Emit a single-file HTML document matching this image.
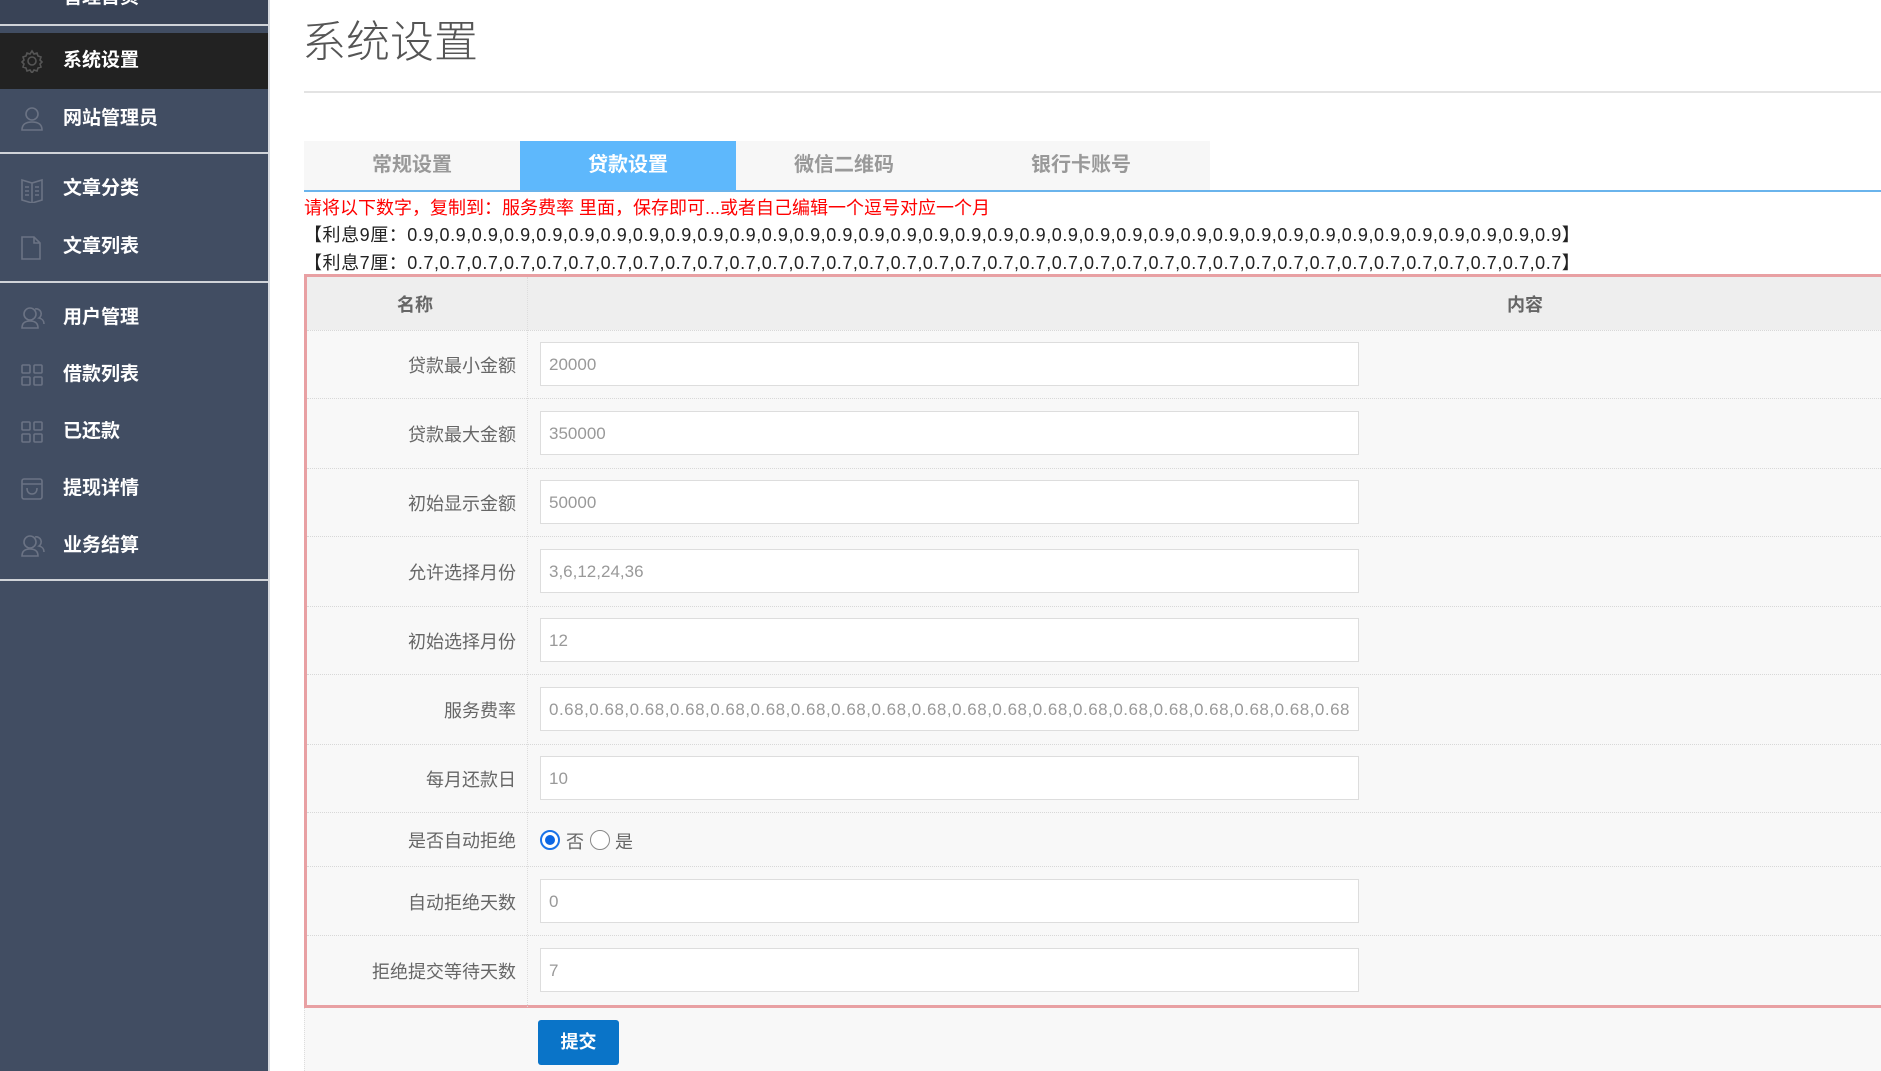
<!DOCTYPE html>
<html><head><meta charset="utf-8"><style>
*{margin:0;padding:0;box-sizing:border-box}
body{width:1881px;height:1071px;overflow:hidden;background:#fff;font-family:"Liberation Sans","Noto Sans CJK SC",sans-serif;position:relative}
.sb{position:absolute;left:0;top:0;width:270px;height:1071px;background:#414d62;border-right:2px solid #d8dbe0}
.sb .top{position:absolute;left:0;top:0;width:268px;height:25px;background:#394356}
.sep{position:absolute;left:0;width:268px;height:2px;background:#d0d3d8}
.it{position:absolute;left:0;width:268px;height:56px;color:#fff;font-weight:bold;font-size:19px;line-height:56px;padding-left:63px}
.it svg{position:absolute;left:20px;top:16px}
.act{background:#222;}
.abs{position:absolute}
.tab{position:absolute;top:141px;height:49px;width:216px;text-align:center;line-height:49px;font-size:20px;font-weight:bold;color:#999;background:#f7f7f7}
.row{position:absolute;left:307px;width:1574px;border-top:1px dotted #d8d8d8}
.lab{position:absolute;right:1365px;font-size:18px;color:#666;text-align:right;white-space:nowrap}
.inp{position:absolute;left:540px;width:819px;height:44px;background:#fff;border:1px solid #ddd;font-size:17px;color:#999;padding-left:8px;line-height:44px}
</style></head><body>
<div class="sb">
<div class="top"></div>
<div class="it" style="top:-30px;">管理首页</div>
<div class="sep" style="top:24px"></div>
<div class="it act" style="top:33px;height:56px">
<svg width="24" height="24" viewBox="0 0 24 24" fill="none" stroke="#555" stroke-width="1.6"><circle cx="12" cy="12" r="4"/><path d="M12 2l2 3 3-1 1 3 3 1-1 3 2 2-2 2 1 3-3 1-1 3-3-1-2 3-2-3-3 1-1-3-3-1 1-3-2-2 2-2-1-3 3-1 1-3 3 1z"/></svg>系统设置</div>
<div class="it" style="top:88px;height:62px;line-height:62px"><svg width="24" height="26" viewBox="0 0 24 26" fill="none" stroke="#6b7384" stroke-width="1.6" style="top:18px"><circle cx="12" cy="8" r="6"/><path d="M2 24c0-6 4-8 10-8s10 2 10 8z"/></svg>网站管理员</div>
<div class="sep" style="top:152px"></div>
<div class="it" style="top:161px"><svg width="24" height="26" viewBox="0 0 24 26" fill="none" stroke="#6b7384" stroke-width="1.6"><path d="M2 3l10 3 10-3v20l-10 3-10-3z M12 6v20 M5 10h4M5 14h4M5 18h4M15 10h4M15 14h4M15 18h4"/></svg>文章分类</div>
<div class="it" style="top:219px"><svg width="22" height="26" viewBox="0 0 22 26" fill="none" stroke="#6b7384" stroke-width="1.6"><path d="M2 2h12l6 6v16H2z M14 2v6h6"/></svg>文章列表</div>
<div class="sep" style="top:281px"></div>
<div class="it" style="top:290px"><svg width="26" height="24" viewBox="0 0 26 24" fill="none" stroke="#6b7384" stroke-width="1.6"><circle cx="10" cy="8" r="6"/><path d="M2 22c0-5 3-7 8-7s8 2 8 7z M15 3a5 5 0 0 1 4 9c4 1 5 3 5 6"/></svg>用户管理</div>
<div class="it" style="top:347px"><svg width="24" height="24" viewBox="0 0 24 24" fill="none" stroke="#6b7384" stroke-width="1.6"><rect x="2" y="2" width="8" height="8" rx="1"/><rect x="14" y="2" width="8" height="8" rx="1"/><rect x="2" y="14" width="8" height="8" rx="1"/><rect x="14" y="14" width="8" height="8" rx="1"/></svg>借款列表</div>
<div class="it" style="top:404px"><svg width="24" height="24" viewBox="0 0 24 24" fill="none" stroke="#6b7384" stroke-width="1.6"><rect x="2" y="2" width="8" height="8" rx="1"/><rect x="14" y="2" width="8" height="8" rx="1"/><rect x="2" y="14" width="8" height="8" rx="1"/><rect x="14" y="14" width="8" height="8" rx="1"/></svg>已还款</div>
<div class="it" style="top:461px"><svg width="24" height="24" viewBox="0 0 24 24" fill="none" stroke="#6b7384" stroke-width="1.6"><rect x="2" y="2" width="20" height="20" rx="2"/><path d="M2 7h20 M7 11c0 4 2 6 5 6s5-2 5-6"/></svg>提现详情</div>
<div class="it" style="top:518px"><svg width="26" height="24" viewBox="0 0 26 24" fill="none" stroke="#6b7384" stroke-width="1.6"><circle cx="10" cy="8" r="6"/><path d="M2 22c0-5 3-7 8-7s8 2 8 7z M15 3a5 5 0 0 1 4 9c4 1 5 3 5 6"/></svg>业务结算</div>
<div class="sep" style="top:579px"></div>
</div>

<div class="abs" style="left:302px;top:6px;font-size:44px;color:#555;font-family:'Noto Sans CJK SC',sans-serif;font-weight:300">系统设置</div>
<div class="abs" style="left:304px;top:91px;width:1577px;height:2px;background:#e3e3e3"></div>

<div class="tab" style="left:304px">常规设置</div>
<div class="tab" style="left:520px;background:#5eb8fc;color:#fff">贷款设置</div>
<div class="tab" style="left:736px">微信二维码</div>
<div class="tab" style="left:952px;width:258px">银行卡账号</div>
<div class="abs" style="left:304px;top:190px;width:1577px;height:2px;background:#6ab4ec"></div>

<div class="abs" style="left:304px;top:194px;font-size:18px;color:#f00;white-space:nowrap">请将以下数字，复制到：服务费率 里面，保存即可...或者自己编辑一个逗号对应一个月</div>
<div class="abs" style="left:304px;top:221px;font-size:18px;color:#222;white-space:nowrap;letter-spacing:0.55px">【利息9厘：0.9,0.9,0.9,0.9,0.9,0.9,0.9,0.9,0.9,0.9,0.9,0.9,0.9,0.9,0.9,0.9,0.9,0.9,0.9,0.9,0.9,0.9,0.9,0.9,0.9,0.9,0.9,0.9,0.9,0.9,0.9,0.9,0.9,0.9,0.9,0.9】</div>
<div class="abs" style="left:304px;top:249px;font-size:18px;color:#222;white-space:nowrap;letter-spacing:0.55px">【利息7厘：0.7,0.7,0.7,0.7,0.7,0.7,0.7,0.7,0.7,0.7,0.7,0.7,0.7,0.7,0.7,0.7,0.7,0.7,0.7,0.7,0.7,0.7,0.7,0.7,0.7,0.7,0.7,0.7,0.7,0.7,0.7,0.7,0.7,0.7,0.7,0.7】</div>

<div class="abs" style="left:304px;top:274px;width:1600px;height:734px;background:#f8f8f8;border:3px solid #e8a0a3"></div>
<div class="abs" style="left:307px;top:277px;width:1574px;height:53px;background:#eee"></div>
<div class="abs" style="left:527px;top:277px;width:1px;height:794px;border-left:1px dotted #ddd"></div>
<div class="abs" style="left:304px;top:1008px;width:1577px;height:63px;background:#f8f8f8;border-left:1px dotted #ddd"></div>
<div class="abs" style="left:397px;top:291px;font-size:18px;font-weight:bold;color:#666">名称</div>
<div class="abs" style="left:1507px;top:291px;font-size:18px;font-weight:bold;color:#666">内容</div>

<div class="row" style="top:330px"></div>
<div class="lab" style="top:352px">贷款最小金额</div><div class="inp" style="top:342px">20000</div>
<div class="row" style="top:398px"></div>
<div class="lab" style="top:421px">贷款最大金额</div><div class="inp" style="top:411px">350000</div>
<div class="row" style="top:468px"></div>
<div class="lab" style="top:490px">初始显示金额</div><div class="inp" style="top:480px">50000</div>
<div class="row" style="top:536px"></div>
<div class="lab" style="top:559px">允许选择月份</div><div class="inp" style="top:549px">3,6,12,24,36</div>
<div class="row" style="top:606px"></div>
<div class="lab" style="top:628px">初始选择月份</div><div class="inp" style="top:618px">12</div>
<div class="row" style="top:674px"></div>
<div class="lab" style="top:697px">服务费率</div><div class="inp" style="top:687px;letter-spacing:0.5px;white-space:nowrap;overflow:hidden">0.68,0.68,0.68,0.68,0.68,0.68,0.68,0.68,0.68,0.68,0.68,0.68,0.68,0.68,0.68,0.68,0.68,0.68,0.68,0.68</div>
<div class="row" style="top:744px"></div>
<div class="lab" style="top:766px">每月还款日</div><div class="inp" style="top:756px">10</div>
<div class="row" style="top:812px"></div>
<div class="lab" style="top:827px">是否自动拒绝</div>
<div class="abs" style="left:540px;top:830px;width:20px;height:20px;border-radius:50%;border:2px solid #1a73e8;background:#fff"><div style="margin:3px;width:10px;height:10px;border-radius:50%;background:#0b66e4"></div></div>
<div class="abs" style="left:566px;top:828px;font-size:18px;color:#666">否</div>
<div class="abs" style="left:590px;top:830px;width:20px;height:20px;border-radius:50%;border:1px solid #888;background:#fff"></div>
<div class="abs" style="left:615px;top:828px;font-size:18px;color:#666">是</div>
<div class="row" style="top:866px"></div>
<div class="lab" style="top:889px">自动拒绝天数</div><div class="inp" style="top:879px">0</div>
<div class="row" style="top:935px"></div>
<div class="lab" style="top:958px">拒绝提交等待天数</div><div class="inp" style="top:948px">7</div>

<div class="abs" style="left:538px;top:1020px;width:81px;height:45px;background:#0a74c8;border-radius:3px;color:#fff;font-weight:bold;font-size:18px;text-align:center;line-height:45px">提交</div>
</body></html>
